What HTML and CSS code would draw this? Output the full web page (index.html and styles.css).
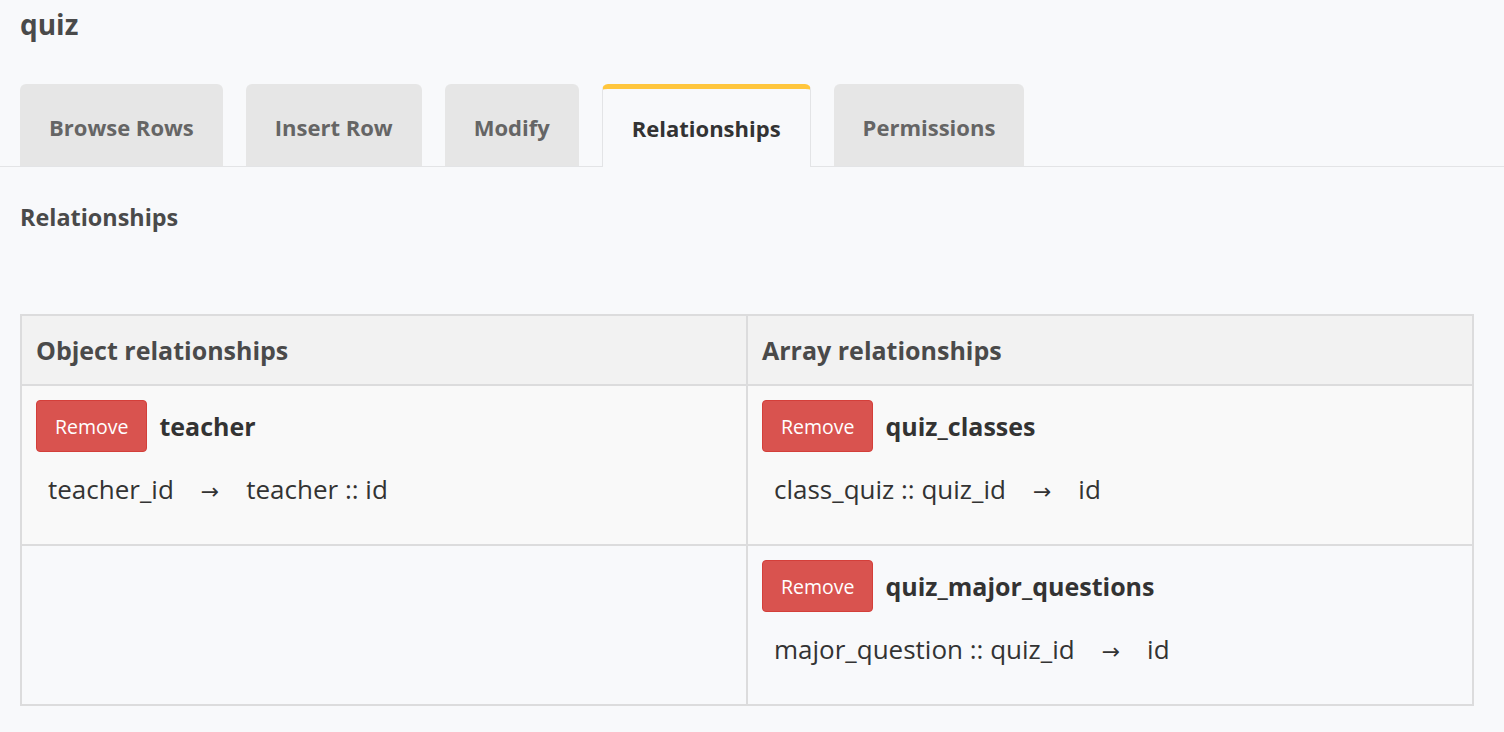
FILE: index.html
```html
<!DOCTYPE html>
<html lang="en">
<head>
<meta charset="utf-8">
<title>quiz - Relationships</title>
<link rel="stylesheet" href="styles.css">
</head>
<body>
<div class="page">
  <h1 class="title">quiz</h1>
  <nav class="tabs">
    <div class="tab">Browse Rows</div>
    <div class="tab">Insert Row</div>
    <div class="tab">Modify</div>
    <div class="tab active">Relationships</div>
    <div class="tab">Permissions</div>
  </nav>
  <section class="content">
    <h2 class="section-title">Relationships</h2>
    <table class="rel-table">
      <thead>
        <tr>
          <th>Object relationships</th>
          <th>Array relationships</th>
        </tr>
      </thead>
      <tbody>
        <tr class="odd">
          <td>
            <div class="rel-head"><button class="btn-remove">Remove</button><span class="rel-name">teacher</span></div>
            <div class="mapping"><span>teacher_id</span><span class="arrow">&rarr;</span><span>teacher :: id</span></div>
          </td>
          <td>
            <div class="rel-head"><button class="btn-remove">Remove</button><span class="rel-name">quiz_classes</span></div>
            <div class="mapping"><span>class_quiz :: quiz_id</span><span class="arrow">&rarr;</span><span>id</span></div>
          </td>
        </tr>
        <tr class="even">
          <td></td>
          <td>
            <div class="rel-head"><button class="btn-remove">Remove</button><span class="rel-name">quiz_major_questions</span></div>
            <div class="mapping"><span>major_question :: quiz_id</span><span class="arrow">&rarr;</span><span>id</span></div>
          </td>
        </tr>
      </tbody>
    </table>
  </section>
</div>
</body>
</html>
```

FILE: styles.css
```css
html, body {
  margin: 0;
  padding: 0;
  background: #f8f9fb;
  font-family: "Open Sans", "Noto Sans", sans-serif;
  color: #333;
}

.page {
  padding-top: 4px;
}

.title {
  margin: 0 0 40px 20px;
  font-size: 28px;
  line-height: 40px;
  font-weight: 700;
  color: #4a4a4a;
}

.tabs {
  display: flex;
  gap: 23px;
  padding-left: 20px;
  border-bottom: 1px solid #e3e4e6;
  height: 82px;
  align-items: flex-end;
}

.tab {
  box-sizing: border-box;
  height: 82px;
  padding: 4px 29px 0;
  display: flex;
  align-items: center;
  background: #e6e6e6;
  border-radius: 6px 6px 0 0;
  font-size: 22px;
  font-weight: 700;
  color: #656565;
  white-space: nowrap;
}

.tab.active {
  height: 83px;
  margin-bottom: -1px;
  background: #f8f9fb;
  border: 1px solid #e3e4e6;
  border-top: 5px solid #ffc63d;
  border-bottom: none;
  color: #333;
  padding: 0 29px;
}

.content {
  padding: 0 30px 0 20px;
}

.section-title {
  margin: 35px 0 82px;
  font-size: 23.4px;
  line-height: 30px;
  font-weight: 700;
  color: #4a4a4a;
}

.rel-table {
  width: 100%;
  border-collapse: collapse;
  border: 2px solid #dcdcdd;
  table-layout: fixed;
}

.rel-table th,
.rel-table td {
  border: 2px solid #dcdcdd;
  text-align: left;
  vertical-align: top;
}

.rel-table th {
  background: #f2f2f2;
  padding: 15px 14px;
  font-size: 25px;
  line-height: 38px;
  font-weight: 700;
  color: #4a4a4a;
}

.rel-table td {
  padding: 14px 14px 0;
  height: 160px;
  box-sizing: border-box;
}

.rel-table tr.odd td {
  background: #f9f9f9;
}

.rel-table tr.even td {
  background: #f8f9fb;
}

.rel-head {
  display: flex;
  align-items: center;
  gap: 12px;
}

.btn-remove {
  box-sizing: border-box;
  height: 52px;
  padding: 0 18px;
  background: #d9534f;
  border: 1px solid #d43f3a;
  border-radius: 4px;
  color: #fff;
  font-family: inherit;
  font-size: 19.5px;
}

.rel-name {
  font-size: 25px;
  font-weight: 700;
  color: #333;
}

.mapping {
  display: flex;
  align-items: baseline;
  gap: 27px;
  padding: 19px 12px 0;
  font-size: 26px;
  line-height: 36px;
  color: #333;
}

.arrow {
  font-family: "DejaVu Sans", sans-serif;
  font-size: 22px;
}
```
